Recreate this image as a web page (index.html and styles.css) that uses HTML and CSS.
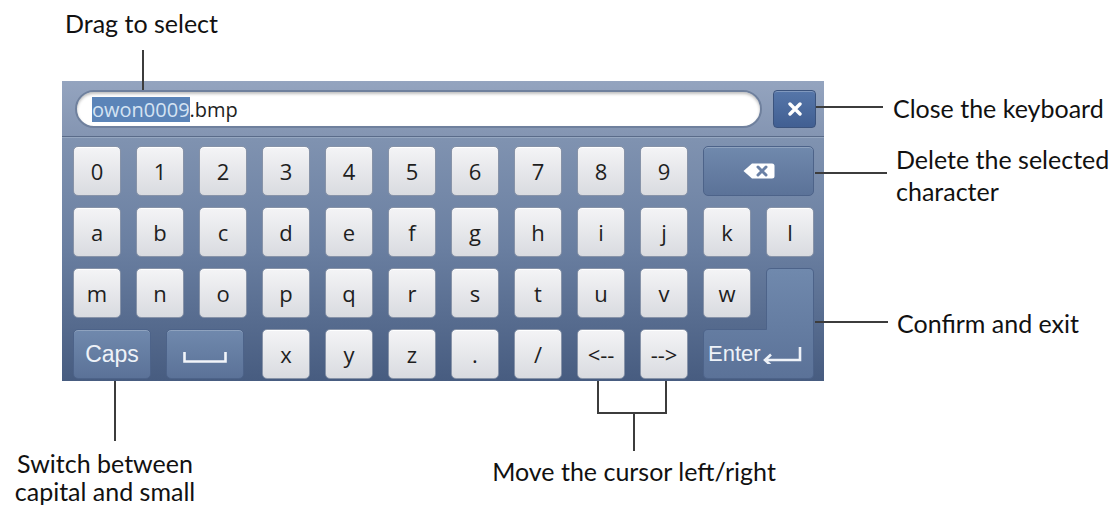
FILE: index.html
```html
<!DOCTYPE html>
<html lang="en">
<head>
<meta charset="UTF-8" />
<title>Soft keyboard</title>
<link rel="stylesheet" href="styles.css">
</head>
<body>
  <div class="figure">
    <div class="keyboard">
      <div class="input-bar">
        <div class="field"><span class="sel">owon0009</span>.bmp</div>
        <button class="close">
          <svg width="14" height="14" viewBox="0 0 14 14"><path d="M2 2 L12 12 M12 2 L2 12" stroke="#fff" stroke-width="3.4" stroke-linecap="round"/></svg>
        </button>
      </div>
      <div class="keys">
        <div class="key">0</div>
        <div class="key">1</div>
        <div class="key">2</div>
        <div class="key">3</div>
        <div class="key">4</div>
        <div class="key">5</div>
        <div class="key">6</div>
        <div class="key">7</div>
        <div class="key">8</div>
        <div class="key">9</div>
        <div class="key fn backspace">
          <svg width="32" height="16" viewBox="0 0 32 16"><path d="M9 0.5 H29 Q31.5 0.5 31.5 3 V13 Q31.5 15.5 29 15.5 H9 L0.5 8 Z" fill="#fff"/><path d="M15 4 L23 12 M23 4 L15 12" stroke="#6a81a6" stroke-width="3" stroke-linecap="round"/></svg>
        </div>

        <div class="key">a</div>
        <div class="key">b</div>
        <div class="key">c</div>
        <div class="key">d</div>
        <div class="key">e</div>
        <div class="key">f</div>
        <div class="key">g</div>
        <div class="key">h</div>
        <div class="key">i</div>
        <div class="key">j</div>
        <div class="key">k</div>
        <div class="key">l</div>

        <div class="key">m</div>
        <div class="key">n</div>
        <div class="key">o</div>
        <div class="key">p</div>
        <div class="key">q</div>
        <div class="key">r</div>
        <div class="key">s</div>
        <div class="key">t</div>
        <div class="key">u</div>
        <div class="key">v</div>
        <div class="key key-w">w</div>
        <div class="enter">
          <svg class="enter-bg" width="111" height="111" viewBox="0 0 111 111">
            <defs>
              <linearGradient id="eg" x1="0" y1="0" x2="0" y2="1">
                <stop offset="0" stop-color="#7089ad"/>
                <stop offset="1" stop-color="#5b7298"/>
              </linearGradient>
            </defs>
            <path d="M68 0.5 H106 Q110.5 0.5 110.5 5 V106 Q110.5 110.5 106 110.5 H5 Q0.5 110.5 0.5 106 V66 Q0.5 61.5 5 61.5 H63.5 V5 Q63.5 0.5 68 0.5 Z" fill="url(#eg)" stroke="#4d6389" stroke-width="1"/>
          </svg>
          <div class="enter-label">Enter<svg width="40" height="18" viewBox="0 0 40 18"><path d="M38 1 V14 H5" fill="none" stroke="#eef2f8" stroke-width="2.6"/><path d="M9 8.5 L3 14 L9 19.5" fill="none" stroke="#eef2f8" stroke-width="2.6"/></svg></div>
        </div>

        <div class="mods">
          <div class="key fn caps">Caps</div>
          <div class="key fn space">
            <svg width="44" height="11" viewBox="0 0 44 11"><path d="M1.5 0 V9.5 H42.5 V0" fill="none" stroke="#f2f5fa" stroke-width="2.6"/></svg>
          </div>
        </div>
        <div class="key">x</div>
        <div class="key">y</div>
        <div class="key">z</div>
        <div class="key">.</div>
        <div class="key">/</div>
        <div class="key">&lt;--</div>
        <div class="key">--&gt;</div>
      </div>
    </div>

    <!-- callouts -->
    <div class="line v" style="left:142px;top:50px;height:40px"></div>
    <div class="label" style="left:65px;top:11px">Drag to select</div>

    <div class="line h" style="left:816px;top:106px;width:67px"></div>
    <div class="label" style="left:893px;top:96px">Close the keyboard</div>

    <div class="line h" style="left:815px;top:172px;width:72px"></div>
    <div class="label tall" style="left:896px;top:143px">Delete the selected<br>character</div>

    <div class="line h" style="left:815px;top:321px;width:73px"></div>
    <div class="label" style="left:897px;top:311px">Confirm and exit</div>

    <div class="line v" style="left:114px;top:381px;height:60px"></div>
    <div class="label center low" style="left:0;top:449px;width:210px">Switch between<br>capital and small</div>

    <div class="bracket"></div>
    <div class="line v" style="left:633px;top:413px;height:38px"></div>
    <div class="label center" style="left:434px;top:459px;width:400px">Move the cursor left/right</div>
  </div>
</body>
</html>
```

FILE: styles.css
```css
body {
  margin: 0;
  background: #fff;
}
.figure {
  position: relative;
  width: 1120px;
  height: 505px;
  padding: 81px 0 0 62px;
  box-sizing: border-box;
  overflow: hidden;
}
.keyboard {
  width: 762px;
  height: 300px;
  background: linear-gradient(#8b9cb8, #7f92b0 20%, #6a7fa1 55%, #475c80);
  box-shadow: inset 0 1px 0 #a9b6cb;
}
.input-bar {
  display: flex;
  align-items: center;
  gap: 11px;
  height: 56px;
  padding: 0 8px 0 13px;
  background: linear-gradient(#94a4bf, #8495b2);
  border-bottom: 1px solid #5a6b89;
  box-shadow: 0 1px 0 #96a7c0;
  box-sizing: border-box;
}
.field {
  flex: 1;
  height: 38px;
  margin-top: 1px;
  border-radius: 19px;
  background: #fff;
  border: 2px solid #6f809d;
  box-shadow: inset 0 2px 3px rgba(0,0,0,0.25);
  box-sizing: border-box;
  padding-left: 15px;
  display: flex;
  align-items: center;
  font-family: "Open Sans", sans-serif;
  font-size: 20px;
  color: #1e1e1e;
}
.sel {
  background: #5b84b8;
  color: #d4e3f3;
  line-height: 25px;
}
.close {
  width: 43px;
  height: 38px;
  margin-top: 1px;
  border: 1px solid #3b537d;
  border-radius: 4px;
  background: linear-gradient(#5676a9, #415f92);
  box-shadow: inset 0 1px 0 rgba(255,255,255,0.25);
  display: flex;
  align-items: center;
  justify-content: center;
  padding: 0;
}
.keys {
  display: grid;
  grid-template-columns: repeat(12, 48px);
  grid-template-rows: repeat(4, 50px);
  column-gap: 15px;
  row-gap: 11px;
  padding: 9px 10px 0 11px;
}
.key {
  display: flex;
  align-items: center;
  justify-content: center;
  border-radius: 5px;
  background: linear-gradient(#f4f4f6, #d9dbe0);
  border: 1px solid #8793a8;
  box-shadow: inset 0 1px 0 #fff;
  box-sizing: border-box;
  font-family: "Open Sans", sans-serif;
  font-size: 22px;
  color: #1e1e1e;
}
.key.fn {
  background: linear-gradient(#7089ad, #5b7298);
  border-color: #4d6389;
  box-shadow: inset 0 1px 0 rgba(255,255,255,0.22);
  font-family: "Liberation Sans", Arial, sans-serif;
  color: #eef2f8;
}
.backspace {
  grid-column: span 2;
}
.key-w {
  grid-column: 11;
  grid-row: 3;
  position: relative;
  z-index: 1;
}
.mods {
  grid-column: span 3;
  display: flex;
  gap: 15px;
}
.caps,
.space {
  width: 78px;
}
.key.caps {
  font-size: 23px;
}
.space svg {
  margin-top: 6px;
}
.enter {
  grid-column: 11 / 13;
  grid-row: 3 / 5;
  position: relative;
  display: flex;
  align-items: flex-end;
}
.enter-bg {
  position: absolute;
  left: 0;
  top: 0;
}
.enter-label {
  position: relative;
  display: flex;
  align-items: center;
  height: 50px;
  padding-left: 5px;
  font-family: "Liberation Sans", Arial, sans-serif;
  font-size: 22px;
  color: #eef2f8;
}
.enter-label svg {
  margin-left: 1px;
  margin-top: 2px;
}
.line {
  position: absolute;
  background: #3c3c3c;
}
.line.v {
  width: 2px;
}
.line.h {
  height: 2px;
}
.bracket {
  position: absolute;
  left: 597px;
  top: 381px;
  width: 66px;
  height: 31px;
  border: 2px solid #3c3c3c;
  border-top: none;
}
.label {
  position: absolute;
  font-family: Lato, "Open Sans", sans-serif;
  font-size: 25px;
  line-height: 1;
  color: #111;
  white-space: nowrap;
}
.label.tall {
  line-height: 32px;
}
.label.low {
  line-height: 28px;
}
.label.center {
  text-align: center;
}
```
